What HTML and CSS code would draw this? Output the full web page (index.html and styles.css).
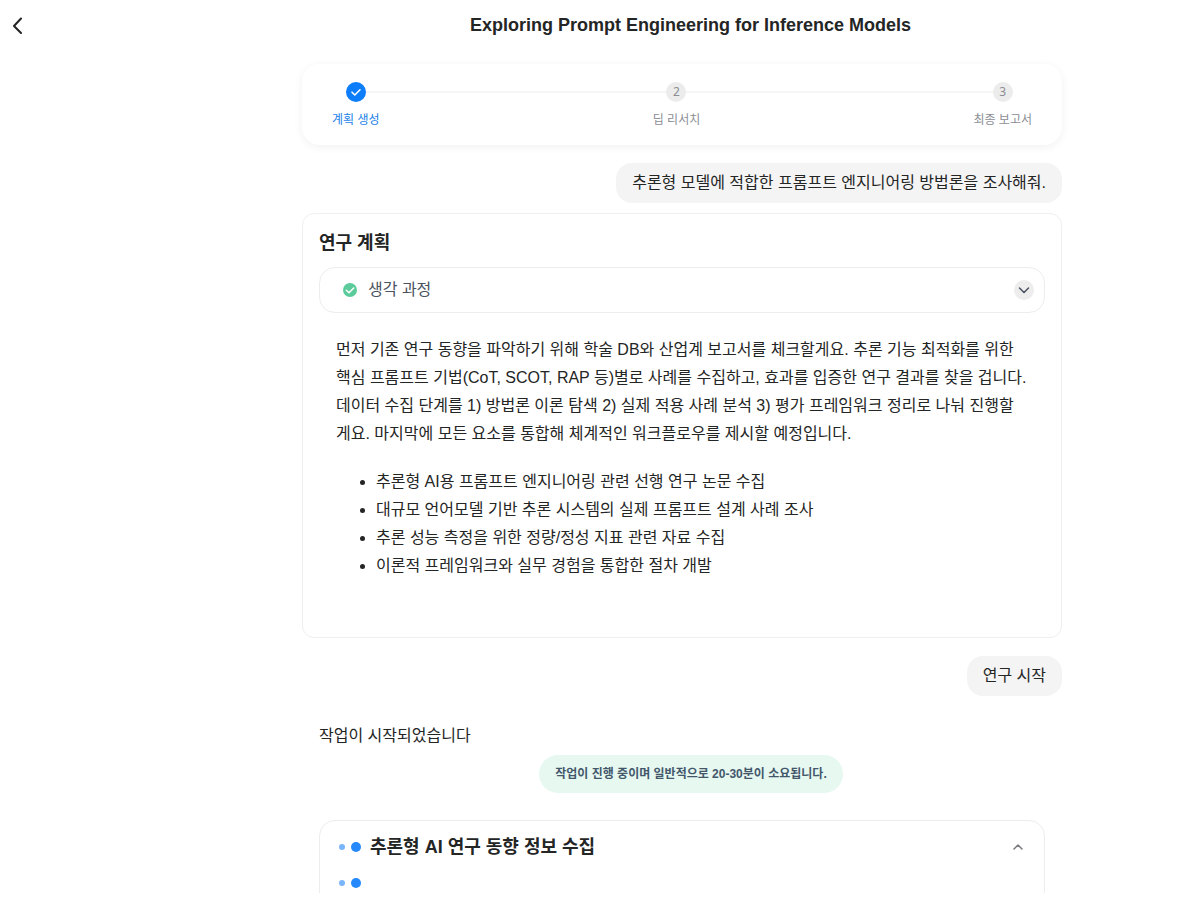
FILE: index.html
```
<!DOCTYPE html>
<html lang="ko">
<head>
  <meta charset="UTF-8" />
  <meta name="viewport" content="width=device-width, initial-scale=1.0" />
  <title>Exploring Prompt Engineering for Inference Models</title>
  <link rel="stylesheet" href="styles.css">
</head>
<body>

<header class="topbar">
  <button class="back-btn" aria-label="뒤로">
    <svg width="12" height="18" viewBox="0 0 12 18" fill="none" stroke="currentColor" stroke-width="2" stroke-linecap="round" stroke-linejoin="round"><path d="M11 2.5L4 10L11 17"/></svg>
  </button>
  <h1>Exploring Prompt Engineering for Inference Models</h1>
</header>

<main class="content">
  <div class="column">

    <!-- Progress -->
    <ol class="steps">
      <li class="step active">
        <span class="step-dot">
          <svg width="12" height="12" viewBox="0 0 12 12" fill="none" stroke="currentColor" stroke-width="1.6" stroke-linecap="round" stroke-linejoin="round"><path d="M2 6.2L4.8 9L10 3.8"/></svg>
        </span>
        <span class="step-label">계획 생성</span>
      </li>
      <li class="step">
        <span class="step-dot">2</span>
        <span class="step-label">딥 리서치</span>
      </li>
      <li class="step">
        <span class="step-dot">3</span>
        <span class="step-label">최종 보고서</span>
      </li>
    </ol>

    <div class="bubble">추론형 모델에 적합한 프롬프트 엔지니어링 방법론을 조사해줘.</div>

    <!-- Research plan -->
    <section class="plan">
      <h2>연구 계획</h2>
      <button class="thinking">
        <svg class="done-icon" width="14" height="14" viewBox="0 0 14 14" fill="none"><circle cx="7" cy="7" r="7" fill="#5ccb9c"/><path d="M3.4 7.3L6 9.8L10.7 5" stroke="#fff" stroke-width="1.5" stroke-linecap="round" stroke-linejoin="round"/></svg>
        <span class="thinking-label">생각 과정</span>
        <span class="chevron-circle">
          <svg width="12" height="12" viewBox="0 0 12 12" fill="none" stroke="currentColor" stroke-width="1.5" stroke-linecap="round" stroke-linejoin="round"><path d="M1.5 4L6 8.5L10.5 4"/></svg>
        </span>
      </button>
      <div class="plan-body">
        <p>먼저 기존 연구 동향을 파악하기 위해 학술 DB와 산업계 보고서를 체크할게요. 추론 기능 최적화를 위한 핵심 프롬프트 기법(CoT, SCOT, RAP 등)별로 사례를 수집하고, 효과를 입증한 연구 결과를 찾을 겁니다. 데이터 수집 단계를 1) 방법론 이론 탐색 2) 실제 적용 사례 분석 3) 평가 프레임워크 정리로 나눠 진행할게요. 마지막에 모든 요소를 통합해 체계적인 워크플로우를 제시할 예정입니다.</p>
        <ul>
          <li>추론형 AI용 프롬프트 엔지니어링 관련 선행 연구 논문 수집</li>
          <li>대규모 언어모델 기반 추론 시스템의 실제 프롬프트 설계 사례 조사</li>
          <li>추론 성능 측정을 위한 정량/정성 지표 관련 자료 수집</li>
          <li>이론적 프레임워크와 실무 경험을 통합한 절차 개발</li>
        </ul>
      </div>
    </section>

    <div class="bubble">연구 시작</div>

    <!-- Running task -->
    <section class="run">
      <p class="run-status">작업이 시작되었습니다</p>
      <div class="notice-row">
        <span class="notice">작업이 진행 중이며 일반적으로 20-30분이 소요됩니다.</span>
      </div>
      <div class="task">
        <div class="task-row">
          <span class="dots"></span>
          <h2>추론형 AI 연구 동향 정보 수집</h2>
          <button class="collapse-btn" aria-label="접기">
            <svg width="12" height="12" viewBox="0 0 12 12" fill="none" stroke="currentColor" stroke-width="1.5" stroke-linecap="round" stroke-linejoin="round"><path d="M2 8L6 4L10 8"/></svg>
          </button>
        </div>
        <div class="task-row">
          <span class="dots"></span>
        </div>
      </div>
    </section>

  </div>
</main>

</body>
</html>
```
FILE: styles.css
```
* { margin: 0; padding: 0; box-sizing: border-box; }

body {
  height: 100vh;
  display: flex;
  flex-direction: column;
  padding-bottom: 16px;
  overflow: hidden;
  background: #fff;
  color: #242525;
  font-family: "Liberation Sans", "Noto Sans CJK KR", sans-serif;
  font-size: 16px;
  line-height: 24px;
}

button {
  font: inherit;
  color: inherit;
  background: none;
  border: none;
  cursor: pointer;
}

svg { display: block; }

h1, h2 {
  font-size: 18px;
  line-height: 24px;
  font-weight: bold;
}

.topbar {
  flex: none;
  display: flex;
  align-items: center;
  height: 50px;
  padding-left: 10px;
}

.topbar h1 {
  flex: 1;
  padding-left: 148px;
  text-align: center;
}

.back-btn { width: 24px; }

.content {
  flex: 1;
  min-height: 0;
  overflow: hidden;
  padding: 14px 0 0 165px;
}

.column {
  display: flex;
  flex-direction: column;
  max-width: 760px;
  margin: 0 auto;
}

.steps {
  position: relative;
  display: flex;
  justify-content: space-between;
  margin-bottom: 18px;
  padding: 18px 30px 16px;
  border-radius: 18px;
  box-shadow: 0 2px 10px rgba(0, 0, 0, 0.06);
  list-style: none;
}

/* line behind the step dots */
.steps::before {
  content: "";
  position: absolute;
  top: 27px;
  left: 54px;
  right: 60px;
  height: 2px;
  background: #f6f6f6;
}

.step {
  position: relative;
  display: flex;
  flex-direction: column;
  align-items: center;
  gap: 9px;
  color: #8b8e94;
  font-size: 12px;
  line-height: 18px;
}

.step-dot {
  display: flex;
  align-items: center;
  justify-content: center;
  width: 20px;
  height: 20px;
  border-radius: 50%;
  background: #ececec;
  font-family: "Noto Sans", sans-serif;
}

.step.active { color: #1a7fe8; }

.step.active .step-dot {
  background: #0d7dfa;
  color: #fff;
}

.bubble {
  align-self: flex-end;
  padding: 8px 16px;
  border-radius: 16px;
  background: #f4f4f4;
}

.plan {
  margin: 10px 0 18px;
  padding: 17px 16px 57px;
  border: 1px solid #efefef;
  border-radius: 12px;
}

.thinking {
  display: flex;
  align-items: center;
  width: 100%;
  height: 46px;
  margin-top: 12px;
  padding: 0 10px 0 23px;
  border: 1px solid #ededed;
  border-radius: 16px;
  color: #4a5260;
}

.thinking-label {
  flex: 1;
  padding-left: 11px;
  text-align: left;
}

.chevron-circle {
  display: flex;
  align-items: center;
  justify-content: center;
  width: 20px;
  height: 20px;
  border-radius: 50%;
  background: #ededed;
}

.plan-body {
  padding: 23px 17px 0;
  line-height: 28px;
}

.plan-body ul {
  margin-top: 20px;
  padding-left: 40px;
}

.run { padding: 28px 17px 0; }

.notice-row {
  display: flex;
  justify-content: center;
  margin: 7px 0 27px;
  padding-left: 18px;
}

.notice {
  padding: 10px 16px;
  border-radius: 19px;
  background: #e6f8f0;
  color: #43576b;
  font-size: 12px;
  line-height: 18px;
  font-weight: bold;
}

.task {
  display: flex;
  flex-direction: column;
  gap: 12px;
  height: 200px;
  padding: 14px 20px 0 19px;
  border: 1px solid #ededed;
  border-radius: 16px;
}

.task-row {
  display: flex;
  align-items: center;
  height: 24px;
}

.task-row h2 {
  flex: 1;
  padding-left: 9px;
}

.dots {
  display: flex;
  align-items: center;
  gap: 6px;
}

.dots::before,
.dots::after {
  content: "";
  border-radius: 50%;
}

.dots::before {
  width: 6px;
  height: 6px;
  background: #7ab5f9;
}

.dots::after {
  width: 10px;
  height: 10px;
  background: #2589fb;
}

.collapse-btn { color: #77797d; }
```
